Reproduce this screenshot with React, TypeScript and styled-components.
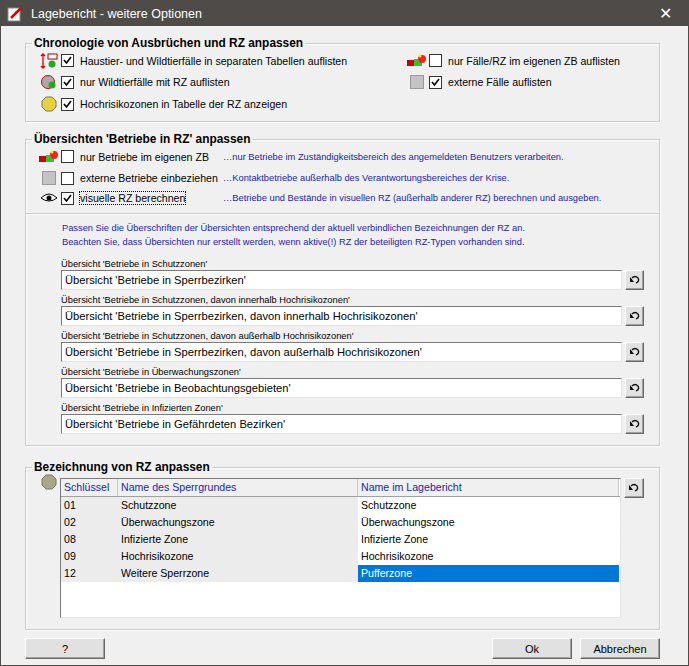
import React from "react";
import styled, { createGlobalStyle } from "styled-components";

const G = createGlobalStyle`
  html,body{margin:0;padding:0;background:#f0f0f0;}
  *{box-sizing:border-box;}
  svg{flex-shrink:0;}
`;

const Win = styled.div`
  width:689px;height:666px;border:1px solid #4e4b48;background:#f0f0f0;
  font-family:"Liberation Sans",Arial,sans-serif;font-size:10.6px;color:#000;
  display:flex;flex-direction:column;
`;
const Title = styled.div`
  height:25px;background:#4e4b48;color:#fff;display:flex;align-items:center;
  padding:0 0 0 6px;font-size:12.5px;gap:8px;
`;
const Close = styled.div`margin-left:auto;width:46px;text-align:center;font-size:16px;font-weight:300;`;
const Body = styled.div`padding:10px 28px 0 24px;display:flex;flex-direction:column;`;
const Group = styled.fieldset<{ h: number; mt?: number }>`
  margin:${p => p.mt ?? 0}px 0 0 0;padding:0;height:${p => p.h}px;
  border:1px solid #c9c9c9;box-shadow:inset 1px 1px 0 #fff,1px 1px 0 #fff;
`;
const Legend = styled.legend`
  font-weight:bold;font-size:11.9px;padding:0 2px;margin-left:6px;line-height:14px;
`;
const Cols = styled.div`display:flex;padding:0 0 0 14px;`;
const Col = styled.div<{ w?: number }>`display:flex;flex-direction:column;${p => p.w ? `width:${p.w}px;` : ""}`;
const Row = styled.div<{ h: number }>`height:${p => p.h}px;display:flex;align-items:center;gap:3px;white-space:nowrap;`;
const IconBox = styled.div`width:18px;height:16px;display:flex;align-items:center;justify-content:center;flex-shrink:0;`;
const Box = styled.div`
  width:13px;height:13px;border:1px solid #333;background:#fff;display:flex;align-items:center;justify-content:center;margin-right:3px;flex-shrink:0;
`;
const Lbl = styled.span<{ focus?: boolean }>`${p => p.focus ? "outline:1px dotted #000;" : ""}`;
const Desc = styled.span`font-size:9.3px;color:#1d1da8;`;
const Sep = styled.div`height:2px;border-top:1px solid #c9c9c9;border-bottom:1px solid #fff;margin:6px 0 0 0;`;
const Info = styled.div`font-size:9.3px;color:#1d1da8;padding:6px 0 0 36px;line-height:14px;`;
const Fields = styled.div`padding:5px 0 0 35px;display:flex;flex-direction:column;`;
const FLabel = styled.div`font-size:9.3px;height:12px;line-height:12px;margin-top:4px;`;
const FRow = styled.div`display:flex;gap:3px;align-items:center;`;
const Input = styled.div`
  width:561px;height:20px;background:#fff;border-top:1px solid #7a7a7a;border-left:1px solid #7a7a7a;
  border-bottom:1px solid #e3e3e3;border-right:1px solid #e3e3e3;font-size:11.2px;padding:1px 3px;line-height:16px;
`;
const Btn = styled.div<{ w: number; h?: number }>`
  width:${p => p.w}px;height:${p => p.h ?? 20}px;background:#e1e1e1;border:1px solid;
  border-color:#fff #696969 #696969 #fff;box-shadow:inset -1px -1px 0 #a0a0a0;
  display:flex;align-items:center;justify-content:center;font-size:11px;flex-shrink:0;
`;
const TableWrap = styled.div`display:flex;gap:3px;padding:4px 0 0 15px;align-items:flex-start;`;
const Table = styled.div`
  width:561px;height:140px;background:#fff;border-top:1px solid #7a7a7a;border-left:1px solid #7a7a7a;
  border-bottom:1px solid #e3e3e3;border-right:1px solid #e3e3e3;
`;
const TR = styled.div<{ head?: boolean }>`
  display:grid;grid-template-columns:57px 240px 261px;height:${p => p.head ? 18 : 17}px;
  ${p => p.head ? "color:#1d1da8;border-bottom:1px solid #a0a0a0;" : "border-bottom:1px solid #f7f7f7;"}
`;
const TD = styled.div<{ grey?: boolean; sel?: boolean; head?: boolean }>`
  font-size:10.6px;padding:0 3px;line-height:17px;white-space:nowrap;
  background:${p => p.sel ? "#0078d7" : p.head ? "#f0f0f0" : p.grey ? "#ececec" : "#fff"};
  color:${p => p.sel ? "#fff" : "inherit"};
  ${p => p.head ? "border-right:1px solid #c9c9c9;" : ""}
`;
const Footer = styled.div`display:flex;padding:8px 28px 0 24px;gap:8px;`;
const Spacer = styled.div`flex:1;`;
const TableIcon = styled.div`width:16px;margin-top:-4px;flex-shrink:0;`;

const Check = () => (
  <svg width="9" height="9" viewBox="0 0 9 9"><path d="M1 4 L3.5 7 L8 1" stroke="#000" strokeWidth="1.6" fill="none" /></svg>
);
const CB = ({ on }: { on?: boolean }) => <Box>{on && <Check />}</Box>;
const Undo = () => (
  <svg width="12" height="10" viewBox="0 0 12 10"><path d="M3 3 Q6 0 9 3 Q11 6 7 8" stroke="#000" strokeWidth="1.3" fill="none" /><path d="M1 2 L1 7 L5 7 Z" fill="#000" /></svg>
);
const ZB = () => (
  <svg width="20" height="14" viewBox="0 0 20 14"><rect x="0" y="6" width="7" height="6" fill="#c00" /><rect x="7" y="5" width="8" height="7" fill="#2c2" /><circle cx="15" cy="5" r="4" fill="#e22" /><circle cx="13" cy="2" r="1.5" fill="#ee0" /></svg>
);
const Grey = () => <svg width="14" height="14"><rect x="0.5" y="0.5" width="13" height="13" fill="#c3c3c3" stroke="#999" /></svg>;
const Poly = ({ c }: { c: string }) => (
  <svg width="16" height="16" viewBox="0 0 16 16"><path d="M5 1 L11 1 L15 5 L15 11 L11 15 L5 15 L1 11 L1 5 Z" fill={c} stroke="#776" /></svg>
);
const Tree = () => (
  <svg width="18" height="16" viewBox="0 0 18 16"><path d="M3 1 L3 15 M1 3 L3 1 L5 3 M1 13 L3 15 L5 13" stroke="#d00" strokeWidth="1.3" fill="none" /><rect x="8" y="1" width="9" height="5" fill="#fff" stroke="#a00" /><circle cx="12" cy="11" r="3.5" fill="#2a2" /></svg>
);
const WildRZ = () => (
  <svg width="18" height="16" viewBox="0 0 18 16"><circle cx="8" cy="8" r="6.5" fill="#aaa" stroke="#c00" /><circle cx="12" cy="11" r="3.5" fill="#2a2" /></svg>
);
const Eye = () => (
  <svg width="18" height="12" viewBox="0 0 18 12"><path d="M1 6 Q9 -2 17 6 Q9 12 1 6 Z" fill="#fff" stroke="#000" /><circle cx="9" cy="6" r="2.5" fill="#000" /></svg>
);
const AppIcon = () => (
  <svg width="16" height="16" viewBox="0 0 16 16"><rect x="1" y="2" width="12" height="13" fill="#fff" stroke="#888" /><path d="M4 12 L14 2" stroke="#d00" strokeWidth="2.5" /></svg>
);

const fields = [
  ["Übersicht 'Betriebe in Schutzzonen'", "Übersicht 'Betriebe in Sperrbezirken'"],
  ["Übersicht 'Betriebe in Schutzzonen, davon innerhalb Hochrisikozonen'", "Übersicht 'Betriebe in Sperrbezirken, davon innerhalb Hochrisikozonen'"],
  ["Übersicht 'Betriebe in Schutzzonen, davon außerhalb Hochrisikozonen'", "Übersicht 'Betriebe in Sperrbezirken, davon außerhalb Hochrisikozonen'"],
  ["Übersicht 'Betriebe in Überwachungszonen'", "Übersicht 'Betriebe in Beobachtungsgebieten'"],
  ["Übersicht 'Betriebe in Infizierten Zonen'", "Übersicht 'Betriebe in Gefährdeten Bezirken'"],
];
const rows = [
  ["01", "Schutzzone", "Schutzzone"],
  ["02", "Überwachungszone", "Überwachungszone"],
  ["08", "Infizierte Zone", "Infizierte Zone"],
  ["09", "Hochrisikozone", "Hochrisikozone"],
  ["12", "Weitere Sperrzone", "Pufferzone"],
];

export default function App() {
  return (
    <Win>
      <G />
      <Title><AppIcon />Lagebericht - weitere Optionen<Close>✕</Close></Title>
      <Body>
        <Group h={86}>
          <Legend>Chronologie von Ausbrüchen und RZ anpassen</Legend>
          <Cols>
            <Col w={368}>
              <Row h={21}><IconBox><Tree /></IconBox><CB on /><Lbl>Haustier- und Wildtierfälle in separaten Tabellen auflisten</Lbl></Row>
              <Row h={22}><IconBox><WildRZ /></IconBox><CB on /><Lbl>nur Wildtierfälle mit RZ auflisten</Lbl></Row>
              <Row h={22}><IconBox><Poly c="#e8d23a" /></IconBox><CB on /><Lbl>Hochrisikozonen in Tabelle der RZ anzeigen</Lbl></Row>
            </Col>
            <Col>
              <Row h={21}><IconBox><ZB /></IconBox><CB /><Lbl>nur Fälle/RZ im eigenen ZB auflisten</Lbl></Row>
              <Row h={22}><IconBox><Grey /></IconBox><CB on /><Lbl>externe Fälle auflisten</Lbl></Row>
            </Col>
          </Cols>
        </Group>
        <Group h={314} mt={10}>
          <Legend>Übersichten 'Betriebe in RZ' anpassen</Legend>
          <Cols>
            <Col w={183}>
              <Row h={21}><IconBox><ZB /></IconBox><CB /><Lbl>nur Betriebe im eigenen ZB</Lbl></Row>
              <Row h={22}><IconBox><Grey /></IconBox><CB /><Lbl>externe Betriebe einbeziehen</Lbl></Row>
              <Row h={18}><IconBox><Eye /></IconBox><CB on /><Lbl focus>visuelle RZ berechnen</Lbl></Row>
            </Col>
            <Col>
              <Row h={21}><Desc>…nur Betriebe im Zuständigkeitsbereich des angemeldeten Benutzers verarbeiten.</Desc></Row>
              <Row h={22}><Desc>…Kontaktbetriebe außerhalb des Verantwortungsbereiches der Krise.</Desc></Row>
              <Row h={18}><Desc>…Betriebe und Bestände in visuellen RZ (außerhalb anderer RZ) berechnen und ausgeben.</Desc></Row>
            </Col>
          </Cols>
          <Sep />
          <Info>
            Passen Sie die Überschriften der Übersichten entsprechend der aktuell verbindlichen Bezeichnungen der RZ an.<br />
            Beachten Sie, dass Übersichten nur erstellt werden, wenn aktive(!) RZ der beteiligten RZ-Typen vorhanden sind.
          </Info>
          <Fields>
            {fields.map(([l, v]) => (
              <React.Fragment key={l}>
                <FLabel>{l}</FLabel>
                <FRow><Input>{v}</Input><Btn w={19}><Undo /></Btn></FRow>
              </React.Fragment>
            ))}
          </Fields>
        </Group>
        <Group h={170} mt={14}>
          <Legend>Bezeichnung von RZ anpassen</Legend>
          <TableWrap>
            <TableIcon><Poly c="#a9a98a" /></TableIcon>
            <Table>
              <TR head><TD head>Schlüssel</TD><TD head>Name des Sperrgrundes</TD><TD head>Name im Lagebericht</TD></TR>
              {rows.map((r, i) => (
                <TR key={r[0]}>
                  <TD grey>{r[0]}</TD><TD grey>{r[1]}</TD><TD sel={i === 4}>{r[2]}</TD>
                </TR>
              ))}
            </Table>
            <Btn w={20}><Undo /></Btn>
          </TableWrap>
        </Group>
      </Body>
      <Footer>
        <Btn w={80} h={21}>?</Btn>
        <Spacer />
        <Btn w={80} h={21}>Ok</Btn>
        <Btn w={80} h={21}>Abbrechen</Btn>
      </Footer>
    </Win>
  );
}
